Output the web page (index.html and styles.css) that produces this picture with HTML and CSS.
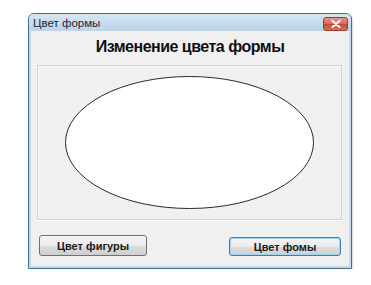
FILE: index.html
```html
<!DOCTYPE html>
<html lang="ru">
<head>
<meta charset="utf-8">
<title>Цвет формы</title>
<link rel="stylesheet" href="styles.css">
</head>
<body>
<div class="window">
  <div class="titlebar">
    <span class="title">Цвет формы</span>
    <span class="close"><svg width="10" height="8" viewBox="0 0 10 8"><path d="M1.5 1 L8.5 7 M8.5 1 L1.5 7" stroke="#fff" stroke-width="2" stroke-linecap="round"/></svg></span>
  </div>
  <div class="client">
    <h1 class="heading">Изменение цвета формы</h1>
    <div class="panel">
      <svg class="canvas" width="303" height="153" viewBox="0 0 303 153">
        <ellipse cx="151.5" cy="76.5" rx="124" ry="66" fill="#fff" stroke="#2a2a2a" stroke-width="1"/>
      </svg>
    </div>
    <div class="buttons">
      <button class="btn">Цвет фигуры</button>
      <button class="btn focused">Цвет фомы</button>
    </div>
  </div>
</div>
</body>
</html>
```

FILE: styles.css
```css
html, body {
  margin: 0;
  padding: 0;
  background: #ffffff;
}

.window {
  box-sizing: border-box;
  margin: 13px 0 0 28px;
  width: 324px;
  height: 256px;
  border: 1px solid #456f82;
  border-radius: 6px 6px 0 0;
  background: #c6d9ec;
  display: flex;
  flex-direction: column;
  box-shadow: 1px 1px 2px rgba(0,0,0,0.15);
}

.titlebar {
  height: 17px;
  display: flex;
  align-items: center;
  justify-content: space-between;
  padding: 0 3px 0 4px;
  background: linear-gradient(#d6e5f3, #bcd3ea);
  border-radius: 5px 5px 0 0;
}

.title {
  font-family: "Liberation Sans", Arial, sans-serif;
  font-size: 11.5px;
  color: #1b2530;
  margin-top: 1px;
}

.close {
  width: 23px;
  height: 12px;
  margin-top: 2px;
  border: 1px solid #9a3a2c;
  border-radius: 3px;
  background: linear-gradient(#e49a88, #d16a55 50%, #c24a35 51%, #d2705a);
  display: flex;
  align-items: center;
  justify-content: center;
}

.client {
  flex: 1;
  margin: 0 2px 2px;
  background: #f0f0f0;
  display: flex;
  flex-direction: column;
}

.heading {
  margin: 0;
  padding-top: 5px;
  height: 22px;
  line-height: 22px;
  text-align: center;
  font-family: "Liberation Sans", Arial, sans-serif;
  font-weight: bold;
  font-size: 16px;
  letter-spacing: -0.5px;
  color: #111;
}

.panel {
  margin: 7px 7px 0 6px;
  height: 153px;
  border: 1px solid #d2d2d2;
  box-shadow: 0 1px 0 #ffffff, inset 1px 1px 0 #fafafa;
  background: #f0f0f0;
}

.canvas {
  display: block;
}

.buttons {
  display: flex;
  justify-content: space-between;
  align-items: flex-start;
  padding: 15px 8px 0 8px;
}

.btn {
  box-sizing: border-box;
  width: 108px;
  height: 21px;
  padding: 0;
  border: 1px solid #707070;
  border-radius: 3px;
  background: linear-gradient(#f4f4f4, #ebebeb 50%, #dddddd 51%, #cfcfcf);
  font-family: "Liberation Sans", Arial, sans-serif;
  font-weight: bold;
  font-size: 11px;
  color: #1a1a1a;
}

.btn.focused {
  width: 112px;
  height: 19px;
  margin-top: 2px;
  border: 1px solid #3c7fb1;
  box-shadow: inset 0 0 0 1px #9fd3f2;
}
```
